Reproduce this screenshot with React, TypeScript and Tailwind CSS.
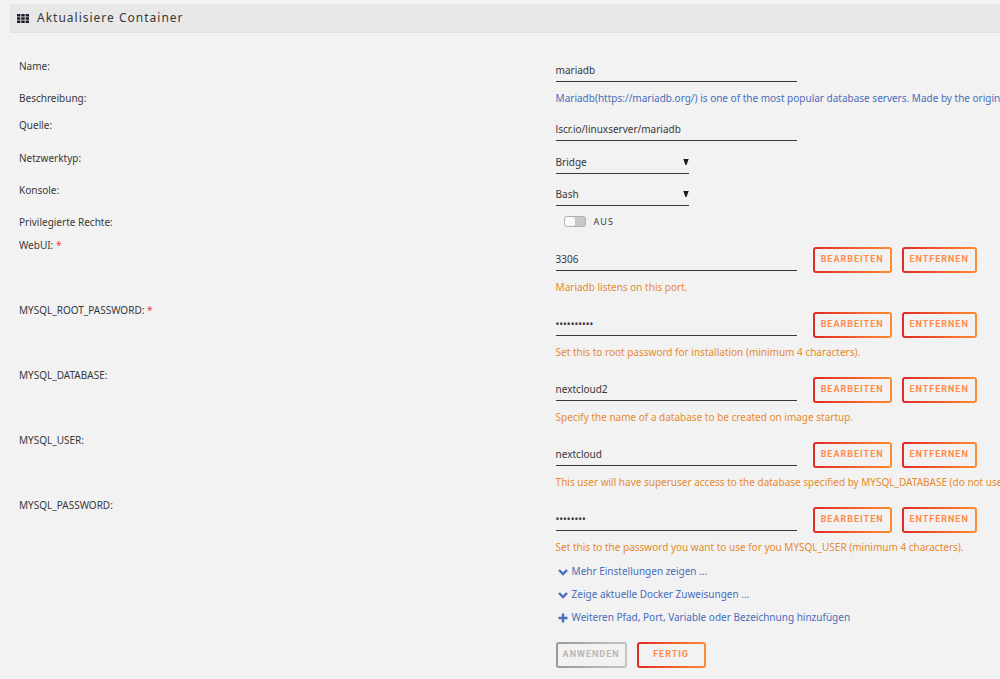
import React, { useState } from 'react';
import clsx from 'clsx';

interface Variable {
  id: string;
  label: string;
  value: string;
  help: string;
  type?: string;
  required?: boolean;
}

const VARIABLES: Variable[] = [
  {
    id: 'webui',
    label: 'WebUI:',
    value: '3306',
    help: 'Mariadb listens on this port.',
    required: true
  },
  {
    id: 'root-password',
    label: 'MYSQL_ROOT_PASSWORD:',
    value: 'secretroot',
    help: 'Set this to root password for installation (minimum 4 characters).',
    type: 'password',
    required: true
  },
  {
    id: 'database',
    label: 'MYSQL_DATABASE:',
    value: 'nextcloud2',
    help: 'Specify the name of a database to be created on image startup.'
  },
  {
    id: 'user',
    label: 'MYSQL_USER:',
    value: 'nextcloud',
    help: 'This user will have superuser access to the database specified by MYSQL_DATABASE (do not use'
  },
  {
    id: 'password',
    label: 'MYSQL_PASSWORD:',
    value: 'password',
    help: 'Set this to the password you want to use for you MYSQL_USER (minimum 4 characters).',
    type: 'password'
  }
];

const LINKS = [
  { icon: ChevronIcon, text: 'Mehr Einstellungen zeigen ...' },
  { icon: ChevronIcon, text: 'Zeige aktuelle Docker Zuweisungen ...' },
  { icon: PlusIcon, text: 'Weiteren Pfad, Port, Variable oder Bezeichnung hinzufügen' }
];

const FIELD = 'h-[26px] pt-[3px] border-b border-[#3a3939] bg-transparent outline-none';

interface RowProps {
  label?: string;
  htmlFor?: string;
  required?: boolean;
  className?: string;
  children: React.ReactNode;
}

function Row({ label, htmlFor, required, className, children }: RowProps) {
  return (
    <div className={clsx('grid grid-cols-[54.7%_1fr] items-start', className)}>
      {htmlFor ? (
        <label htmlFor={htmlFor} className="leading-5">
          {label} {required && <span className="text-[#e8403c]">*</span>}
        </label>
      ) : (
        <span className="leading-5">{label}</span>
      )}
      <div className="min-w-0">{children}</div>
    </div>
  );
}

interface ButtonProps {
  className?: string;
  disabled?: boolean;
  children: React.ReactNode;
}

function GradientButton({ className, disabled, children }: ButtonProps) {
  return (
    <button
      type="button"
      disabled={disabled}
      className={clsx(
        "h-[26px] shrink-0 rounded-[3px] border-2 border-transparent font-['Roboto',sans-serif] text-[9px] font-bold uppercase tracking-[1px]",
        disabled
          ? 'text-[#b8b8b8] [background:linear-gradient(#f2f2f2,#f2f2f2)_padding-box,linear-gradient(90deg,#999999,#c4c4c4)_border-box]'
          : 'text-[#ff8c4a] [background:linear-gradient(#f2f2f2,#f2f2f2)_padding-box,linear-gradient(90deg,#e22828,#ff8c2f)_border-box]',
        className
      )}
    >
      {children}
    </button>
  );
}

function GridIcon() {
  return (
    <svg viewBox="0 0 12 9" className="h-[9px] w-3" fill="#1c1b2b">
      {[0, 3.3, 6.6].map(y => (
        <path key={y} d={`M0 ${y}h3.4v2.4H0zM4.3 ${y}h3.4v2.4H4.3zM8.6 ${y}H12v2.4H8.6z`} />
      ))}
    </svg>
  );
}

function ChevronIcon() {
  return (
    <svg viewBox="0 0 10 10" className="h-[10px] w-[10px]" fill="none" stroke="currentColor" strokeWidth="2.4">
      <path d="M1 3l4 4 4-4" />
    </svg>
  );
}

function PlusIcon() {
  return (
    <svg viewBox="0 0 10 10" className="h-[10px] w-[10px]" fill="none" stroke="currentColor" strokeWidth="2.4">
      <path d="M5 .5v9M.5 5h9" />
    </svg>
  );
}

function SelectArrow() {
  return (
    <svg viewBox="0 0 6 6" className="pointer-events-none absolute top-[11px] right-0 h-[6px] w-[6px]">
      <path d="M.3 0h5.4L3.5 6h-1z" fill="#1c1b1b" />
    </svg>
  );
}

export default function App() {
  const [privileged, setPrivileged] = useState(false);

  return (
    <main className="min-h-screen overflow-hidden whitespace-nowrap bg-[#f2f2f2] pt-1 pb-[11px] pl-[10px] font-['Noto_Sans',sans-serif] text-[10px] text-[#383838]">
      <h1 className="flex h-[29px] items-center gap-2 border-b border-[#e0e0e0] bg-[#e8e8e8] pl-[7px] text-[12px] tracking-[1px]">
        <GridIcon />
        Aktualisiere Container
      </h1>

      <form className="pt-[23px] pl-[9px]">
        <Row label="Name:" htmlFor="name" className="h-8">
          <input id="name" defaultValue="mariadb" className={clsx(FIELD, 'w-[241px]')} />
        </Row>
        <Row label="Beschreibung:" className="h-[27px]">
          <p className="leading-5 text-[#486dba]">
            Mariadb(https://mariadb.org/) is one of the most popular database servers. Made by the original
          </p>
        </Row>
        <Row label="Quelle:" htmlFor="source" className="h-[33px]">
          <input id="source" defaultValue="lscr.io/linuxserver/mariadb" className={clsx(FIELD, 'w-[241px]')} />
        </Row>
        <Row label="Netzwerktyp:" htmlFor="network" className="h-8">
          <div className="relative w-[133px]">
            <select id="network" className={clsx(FIELD, 'w-full appearance-none')}>
              <option>Bridge</option>
              <option>Host</option>
            </select>
            <SelectArrow />
          </div>
        </Row>
        <Row label="Konsole:" htmlFor="shell" className="h-8">
          <div className="relative w-[133px]">
            <select id="shell" className={clsx(FIELD, 'w-full appearance-none')}>
              <option>Bash</option>
              <option>Shell</option>
            </select>
            <SelectArrow />
          </div>
        </Row>
        <Row label="Privilegierte Rechte:" htmlFor="privileged" className="h-[23px]">
          <div className="flex h-[19px] items-center gap-2 pl-2">
            <input
              id="privileged"
              type="checkbox"
              role="switch"
              checked={privileged}
              onChange={e => setPrivileged(e.target.checked)}
              className="h-[11px] w-[22px] appearance-none rounded-[3px] border border-[#b0b0b0] bg-[#c8c8c8] before:block before:h-full before:w-[10px] before:rounded-[2px] before:bg-[#fafafa] checked:bg-[#ff8c2f] checked:before:ml-auto"
            />
            <span className="text-[9px] tracking-[1px]">{privileged ? 'AN' : 'AUS'}</span>
          </div>
        </Row>

        {VARIABLES.map(v => (
          <Row key={v.id} label={v.label} htmlFor={v.id} required={v.required} className="h-[65px]">
            <div className="flex items-start pt-[10px]">
              <input
                id={v.id}
                type={v.type ?? 'text'}
                defaultValue={v.value}
                autoComplete="off"
                className={clsx(FIELD, 'w-[241px]')}
              />
              <div className="flex gap-[10px] pt-[2px] pl-4">
                <GradientButton className="w-[79px]">Bearbeiten</GradientButton>
                <GradientButton className="w-[75px]">Entfernen</GradientButton>
              </div>
            </div>
            <p className="pt-1 leading-5 text-[#e68a2e]">{v.help}</p>
          </Row>
        ))}

        <Row>
          {LINKS.map(({ icon: Icon, text }) => (
            <a key={text} href="#" className="flex h-[23px] items-center gap-1 pl-[2px] text-[#486dba]">
              <Icon />
              {text}
            </a>
          ))}
          <div className="flex gap-[10px] pt-[13px]">
            <GradientButton disabled className="w-[71px]">Anwenden</GradientButton>
            <GradientButton className="w-[69px]">Fertig</GradientButton>
          </div>
        </Row>
      </form>
    </main>
  );
}
